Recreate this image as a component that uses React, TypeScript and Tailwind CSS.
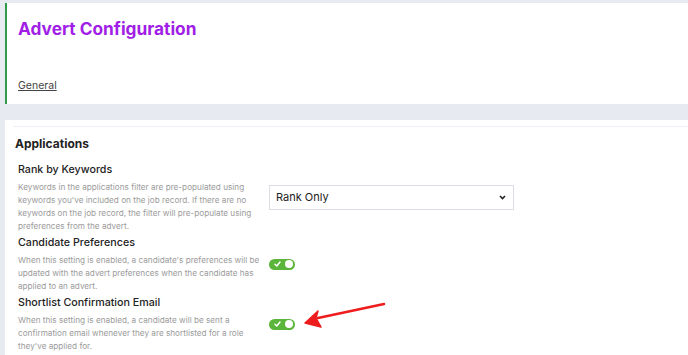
import React from "react";

function Toggle() {
  return (
    <div className="relative w-[26px] h-[11px] rounded-full bg-[#5bb53a] flex items-center">
      <svg className="absolute left-[5px] top-[2.5px]" width="7" height="6" viewBox="0 0 7 6">
        <path d="M1 3.2 L2.8 5 L6 1" stroke="white" strokeWidth="1.5" fill="none" strokeLinecap="round" strokeLinejoin="round" />
      </svg>
      <div className="absolute right-[2px] top-[1.5px] w-[8px] h-[8px] rounded-full bg-white" />
    </div>
  );
}

function Row({ title, desc, children }: { title: string; desc: string; children: React.ReactNode }) {
  return (
    <div className="flex items-center">
      <div className="w-[251px] shrink-0 pr-[2px]">
        <div className="text-[10.7px] leading-[16px] text-[#222] font-medium">{title}</div>
        <div className="mt-[3px] text-[8.2px] leading-[13px] text-[#9b9b9b]">{desc}</div>
      </div>
      <div>{children}</div>
    </div>
  );
}

export default function App() {
  return (
    <div
      className="relative h-[355px] overflow-hidden bg-[#e8eaf2] pt-[3px]"
      style={{ fontFamily: "Inter, 'Noto Sans', sans-serif" }}
    >
      <div className="ml-[5px] h-[101px] bg-white border-l-[2px] border-[#2f9b49] pl-[11px] pt-[14px]">
        <div className="text-[17.3px] leading-[24px] font-bold text-[#a11ee6]">Advert Configuration</div>
        <div className="mt-[38px] text-[10.5px] leading-[14px] text-[#444] underline">General</div>
      </div>
      <div className="mt-[16px] ml-[5px] bg-white pt-[6px] pb-[10px]">
        <div className="ml-[8px] border-t border-[#eff0f5] pt-[8px] pl-[2px]">
          <div className="text-[12px] leading-[18px] font-bold text-[#222]">Applications</div>
          <div className="mt-[9px] pl-[3px] flex flex-col gap-[2px]">
            <Row
              title="Rank by Keywords"
              desc="Keywords in the applications filter are pre-populated using keywords you've included on the job record. If there are no keywords on the job record, the filter will pre-populate using preferences from the advert."
            >
              <div className="w-[245px] h-[25px] border border-[#dcdde3] bg-white flex items-center justify-between pl-[6px] pr-[7px]">
                <span className="text-[11px] text-[#222]">Rank Only</span>
                <svg width="7" height="5" viewBox="0 0 7 5">
                  <path d="M1 1 L3.5 3.5 L6 1" stroke="#222" strokeWidth="1.6" fill="none" />
                </svg>
              </div>
            </Row>
            <Row
              title="Candidate Preferences"
              desc="When this setting is enabled, a candidate's preferences will be updated with the advert preferences when the candidate has applied to an advert."
            >
              <Toggle />
            </Row>
            <Row
              title="Shortlist Confirmation Email"
              desc="When this setting is enabled, a candidate will be sent a confirmation email whenever they are shortlisted for a role they've applied for."
            >
              <Toggle />
            </Row>
          </div>
        </div>
      </div>
      <svg className="absolute left-0 top-0 pointer-events-none" width="688" height="355">
        <path d="M384 304 L318 318" stroke="#ee1c1c" strokeWidth="2.5" strokeLinecap="round" />
        <path d="M305 323 L318 311 L316 318 L321 327 Z" fill="#ee1c1c" stroke="#ee1c1c" strokeWidth="1.5" strokeLinejoin="round" />
      </svg>
    </div>
  );
}
